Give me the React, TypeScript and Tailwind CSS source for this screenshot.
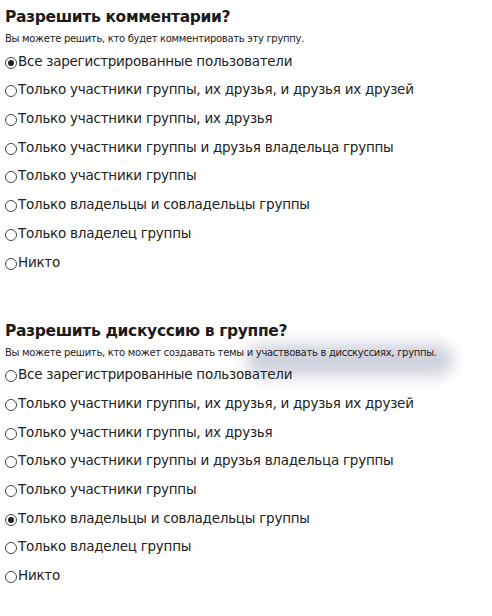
import React from 'react'

const options = [
  'Все зарегистрированные пользователи',
  'Только участники группы, их друзья, и друзья их друзей',
  'Только участники группы, их друзья',
  'Только участники группы и друзья владельца группы',
  'Только участники группы',
  'Только владельцы и совладельцы группы',
  'Только владелец группы',
  'Никто',
]

const Radio = ({ checked }: { checked: boolean }) => (
  <span className="mr-[1px] inline-flex h-[12px] w-[12px] shrink-0 items-center justify-center rounded-full border border-[#444] bg-white">
    {checked && <span className="h-[6px] w-[6px] rounded-full bg-[#222]" />}
  </span>
)

const Section = ({
  title,
  hint,
  selected,
  glow,
}: {
  title: string
  hint: string
  selected: number
  glow?: boolean
}) => (
  <section className="relative">
    {glow && (
      <div className="pointer-events-none absolute left-[246px] top-[23px] h-[32px] w-[208px] rounded-full bg-[#c2c5d4] opacity-80 blur-[8px]" />
    )}
    <h2 className="relative pl-[5px] text-[15.5px] font-bold leading-[20px] tracking-[-0.35px] text-[#1b1b1b]">
      {title}
    </h2>
    <p className="relative mt-[5px] pl-[5px] text-[10px] leading-[14px] tracking-[-0.3px] text-[#222]">{hint}</p>
    <div className="relative flex flex-col">
      {options.map((o, i) => (
        <label key={i} className="flex h-[28.7px] items-end pl-[5px] pb-[6px]">
          <Radio checked={i === selected} />
          <span className="text-[13.5px] leading-[16px] tracking-[-0.25px] text-[#222]">{o}</span>
        </label>
      ))}
    </div>
  </section>
)

export default function App() {
  return (
    <div
      className="h-[616px] w-[492px] bg-white pt-[7px]"
      style={{ fontFamily: 'Tahoma, "DejaVu Sans", sans-serif' }}
    >
      <Section
        title="Разрешить комментарии?"
        hint="Вы можете решить, кто будет комментировать эту группу."
        selected={0}
      />
      <div className="h-[45px]" />
      <Section
        title="Разрешить дискуссию в группе?"
        hint="Вы можете решить, кто может создавать темы и участвовать в дисскуссиях, группы."
        selected={5}
        glow
      />
    </div>
  )
}
